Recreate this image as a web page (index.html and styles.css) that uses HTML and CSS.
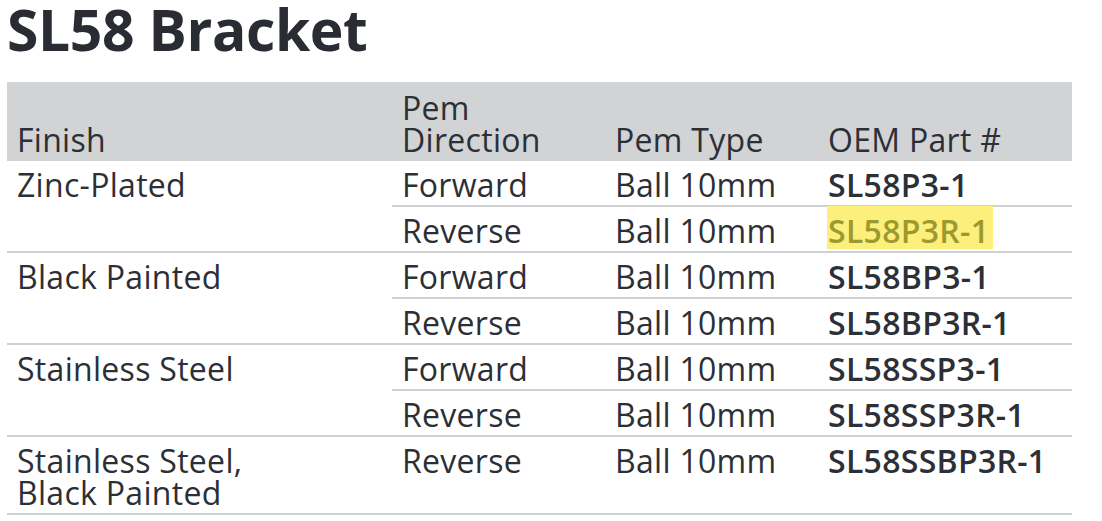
FILE: index.html
```html
<!DOCTYPE html>
<html lang="en">
<head>
<meta charset="utf-8">
<title>SL58 Bracket</title>
<link rel="stylesheet" href="styles.css">
</head>
<body>
<main class="page">
  <h1 class="title">SL58 Bracket</h1>
  <table class="spec">
    <colgroup>
      <col class="c-finish">
      <col class="c-dir">
      <col class="c-type">
      <col class="c-part">
    </colgroup>
    <thead>
      <tr>
        <th>Finish</th>
        <th>Pem<br>Direction</th>
        <th>Pem Type</th>
        <th>OEM Part #</th>
      </tr>
    </thead>
    <tbody>
      <tr>
        <td rowspan="2" class="finish">Zinc-Plated</td>
        <td>Forward</td><td>Ball 10mm</td><td class="part">SL58P3-1</td>
      </tr>
      <tr>
        <td>Reverse</td><td>Ball 10mm</td><td class="part"><span class="hl">SL58P3R-1</span></td>
      </tr>
      <tr>
        <td rowspan="2" class="finish">Black Painted</td>
        <td>Forward</td><td>Ball 10mm</td><td class="part">SL58BP3-1</td>
      </tr>
      <tr>
        <td>Reverse</td><td>Ball 10mm</td><td class="part">SL58BP3R-1</td>
      </tr>
      <tr>
        <td rowspan="2" class="finish">Stainless Steel</td>
        <td>Forward</td><td>Ball 10mm</td><td class="part">SL58SSP3-1</td>
      </tr>
      <tr>
        <td>Reverse</td><td>Ball 10mm</td><td class="part">SL58SSP3R-1</td>
      </tr>
      <tr>
        <td class="finish"><span class="ln">Stainless Steel,</span><span class="ln">Black Painted</span></td>
        <td>Reverse</td><td>Ball 10mm</td><td class="part">SL58SSBP3R-1</td>
      </tr>
    </tbody>
  </table>
</main>
</body>
</html>
```

FILE: styles.css
```css
html, body {
  margin: 0;
  padding: 0;
  background: #ffffff;
}

body {
  font-family: "Open Sans", "Liberation Sans", sans-serif;
  color: #2c2f36;
}

.page {
  padding: 0 30px 0 7px;
}

.title {
  margin: 0;
  font-family: "Open Sans", "Liberation Sans", sans-serif;
  font-weight: 700;
  font-size: 57px;
  line-height: 58px;
  letter-spacing: -0.4px;
  color: #2a2c33;
  height: 82px;
}

.spec {
  width: 1065px;
  border-collapse: collapse;
  font-size: 32px;
  line-height: 32px;
  letter-spacing: 0.3px;
}

.c-finish { width: 385px; }
.c-dir { width: 213px; }
.c-type { width: 213px; }
.c-part { width: 254px; }

.spec th {
  background: #d1d3d5;
  font-weight: 400;
  text-align: left;
  vertical-align: bottom;
  padding: 10px 6px 5px 10px;
  color: #2c2f36;
  white-space: nowrap;
}

.spec td {
  padding: 8px 6px 4px 10px;
  text-align: left;
  vertical-align: top;
  border-bottom: 2px solid #cfd0d2;
  white-space: nowrap;
}

.spec td.part {
  font-weight: 600;
}

.ln {
  display: block;
}

.hl {
  display: inline-block;
  background: #fcef7c;
  color: #9c9a2e;
  padding: 9px 4px 2px 1px;
  margin: -9px 0 -2px -1px;
}
```
